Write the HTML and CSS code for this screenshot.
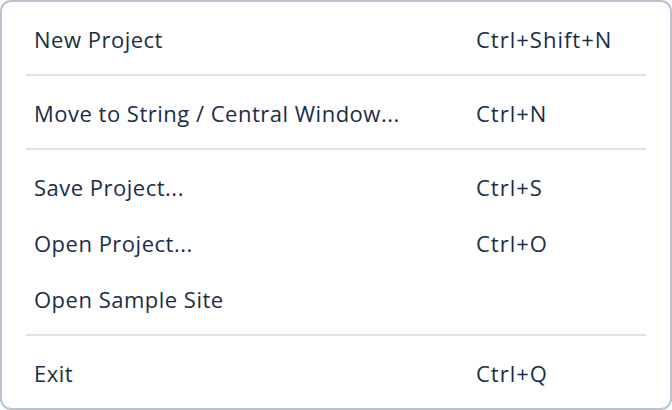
FILE: index.html
```html
<!DOCTYPE html>
<html>
<head>
<meta charset="utf-8">
<link rel="stylesheet" href="styles.css">
</head>
<body>
<div class="menu">
  <div class="item"><span class="label">New Project</span><span class="key">Ctrl+Shift+N</span></div>
  <div class="sep"></div>
  <div class="item"><span class="label">Move to String / Central Window...</span><span class="key">Ctrl+N</span></div>
  <div class="sep"></div>
  <div class="item"><span class="label">Save Project...</span><span class="key">Ctrl+S</span></div>
  <div class="item"><span class="label">Open Project...</span><span class="key">Ctrl+O</span></div>
  <div class="item"><span class="label">Open Sample Site</span><span class="key"></span></div>
  <div class="sep"></div>
  <div class="item"><span class="label">Exit</span><span class="key">Ctrl+Q</span></div>
</div>
</body>
</html>
```
FILE: styles.css
```css
html, body {
  margin: 0;
  padding: 0;
  background: #ffffff;
}
.menu {
  box-sizing: border-box;
  width: 672px;
  height: 410px;
  border: 2px solid #b9c2cf;
  border-radius: 11px;
  background: #ffffff;
  padding: 7.5px 0 8px 0;
  font-family: "Open Sans", "Noto Sans", sans-serif;
  font-size: 22px;
  letter-spacing: 0.5px;
  color: #1a2d48;
}
.item {
  display: flex;
  align-items: flex-start;
  height: 56px;
  box-sizing: border-box;
  padding: 2px 0 0 32px;
  line-height: 54px;
  white-space: nowrap;
}
.label {
  width: 442px;
}
.key {
  flex: 1;
  letter-spacing: 1px;
}
.sep {
  height: 2px;
  margin: 8px 24px;
  background: #dce2ea;
}
```
